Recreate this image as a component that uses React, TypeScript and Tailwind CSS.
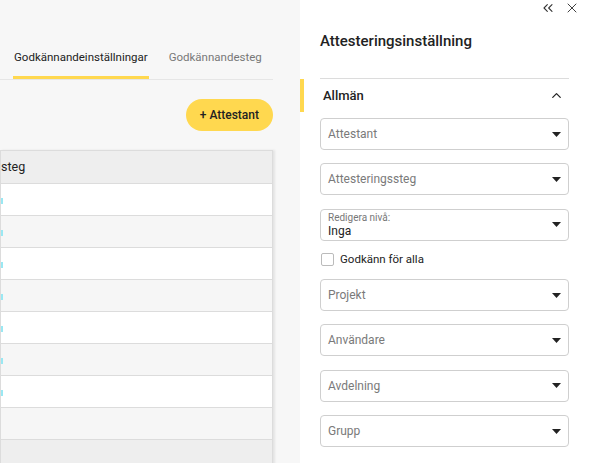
import { ChevronUp, ChevronsLeft, X } from "lucide-react";

const rows = [0, 1, 2, 3, 4, 5, 6, 7];

function Caret() {
  return (
    <svg width="9" height="5" viewBox="0 0 9 5" className="shrink-0">
      <path d="M0 0h9L4.5 5z" fill="#222" />
    </svg>
  );
}

function SelectField({ label, value }: { label: string; value?: string }) {
  return (
    <div className="flex h-[32px] items-center rounded-[4px] border border-[#cfcfcf] bg-white pl-[7px] pr-[7px]">
      {value ? (
        <div className="flex flex-1 flex-col leading-none">
          <span className="text-[10px] text-[#777]">{label}</span>
          <span className="mt-[2px] text-[12px] text-[#222]">{value}</span>
        </div>
      ) : (
        <span className="flex-1 text-[12px] text-[#7a7a7a]">{label}</span>
      )}
      <Caret />
    </div>
  );
}

export default function App() {
  return (
    <div className="flex h-[463px] w-[592px] overflow-hidden bg-white font-['Roboto',sans-serif] text-[#222]">
      {/* left: table settings */}
      <div className="flex h-full w-[300px] shrink-0 flex-col overflow-hidden bg-[#f7f7f7] pr-[27px]">
        <div className="mt-[49px] flex border-b border-[#e6e6e6] text-[11.5px] leading-[16px]">
          <div className="ml-[13px] border-b-[3px] border-[#ffd84f] px-[1px] pb-[11px]">Godkännandeinställningar</div>
          <div className="ml-[20px] pb-[11px] text-[#777]">Godkännandesteg</div>
        </div>
        <div className="mt-[19px] flex justify-end">
          <button className="h-[32px] rounded-full bg-[#ffd84f] px-[14px] text-[12px] font-medium text-[#222]">
            + Attestant
          </button>
        </div>
        <div className="mt-[19px] border border-[#dcdcdc] shadow-[2px_0_2px_rgba(0,0,0,0.08)]">
          <div className="flex h-[33px] items-center border-b border-[#dcdcdc] bg-[#eeeeee] text-[12.5px]">
            <span>steg</span>
          </div>
          {rows.map((r) => (
            <div
              key={r}
              className={`flex h-[32px] items-center border-b border-[#dcdcdc] ${r % 2 === 0 ? "bg-white" : "bg-[#f6f6f6]"}`}
            >
              {r < 7 && <span className="mt-[2px] h-[6px] w-[2px] bg-[#9ae8f3]" />}
            </div>
          ))}
          <div className="h-[30px] bg-[#eeeeee]" />
        </div>
      </div>

      {/* right: side panel */}
      <div className="flex flex-1 flex-col">
        <div className="flex h-[14px] items-center justify-end gap-[8px] pr-[12px] pt-[2px] text-[#333]">
          <ChevronsLeft size={16} strokeWidth={1.6} />
          <X size={16} strokeWidth={1.4} />
        </div>
        <div className="ml-[20px] mt-[20px] text-[15px] font-medium leading-none">Attesteringsinställning</div>
        <div className="ml-[20px] mr-[23px] mt-[29px] border-t border-[#dcdcdc]" />
        <div className="flex h-[33px] items-center border-l-[4px] border-[#ffd84f] pl-[19px] pr-[28px]">
          <span className="flex-1 text-[13px] font-medium">Allmän</span>
          <ChevronUp size={15} strokeWidth={2} />
        </div>
        <div className="ml-[20px] mr-[23px] mt-[6px] flex flex-col gap-[13.3px]">
          <SelectField label="Attestant" />
          <SelectField label="Attesteringssteg" />
          <SelectField label="Redigera nivå:" value="Inga" />
          <label className="flex h-[12px] items-center gap-[6px] text-[11.5px]">
            <span className="ml-[1px] h-[13px] w-[13px] rounded-[2px] border border-[#bbb] bg-white" />
            Godkänn för alla
          </label>
          <SelectField label="Projekt" />
          <SelectField label="Användare" />
          <SelectField label="Avdelning" />
          <SelectField label="Grupp" />
        </div>
      </div>
    </div>
  );
}
